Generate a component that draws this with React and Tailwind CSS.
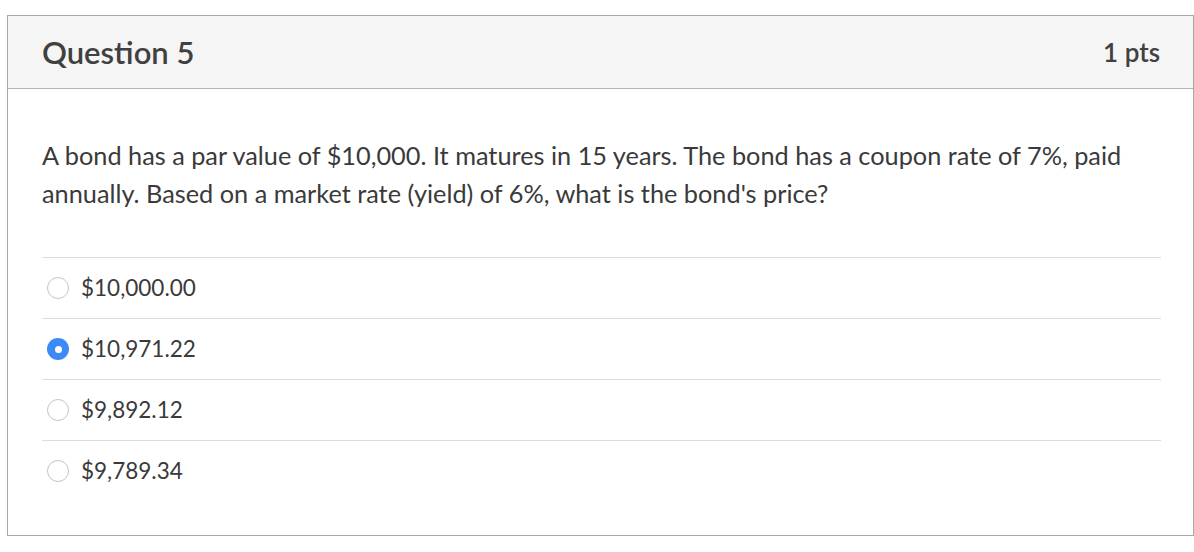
import React, { useState } from 'react';

const opcoes = ['$10,000.00', '$10,971.22', '$9,892.12', '$9,789.34'];

function Radio({ checked }) {
  if (checked) {
    return (
      <span className="w-[22px] h-[22px] rounded-full bg-[#3d8af7] flex items-center justify-center flex-shrink-0">
        <span className="w-[7px] h-[7px] rounded-full bg-white"></span>
      </span>
    );
  }
  return <span className="w-[22px] h-[22px] rounded-full border border-[#c4c4c4] bg-white flex-shrink-0"></span>;
}

export default function App() {
  const [selecionada, setSelecionada] = useState(1);

  return (
    <div className="w-[1194px] h-[552px] bg-white pt-[15px] pl-[7px]" style={{ fontFamily: 'Lato, "Liberation Sans", sans-serif' }}>
      <div className="w-[1187px] h-[521px] border border-[#a8a8a8] flex flex-col">
        <div className="h-[73px] bg-[#f5f5f5] border-b border-[#b3b3b3] flex items-center justify-between pl-[34px] pr-[33px]">
          <h2 className="text-[31px] font-semibold text-[#404040]">Question 5</h2>
          <span className="text-[26px] font-semibold text-[#404040]">1 pts</span>
        </div>
        <div className="pl-[34px] pr-[32px] pt-[47px]">
          <p className="text-[25.3px] leading-[38px] text-[#3a3a3a]">
            A bond has a par value of $10,000. It matures in 15 years. The bond has a coupon rate of 7%, paid annually. Based on a market rate (yield) of 6%, what is the bond's price?
          </p>
          <div className="mt-[45px]">
            {opcoes.map((op, idx) => (
              <div
                key={idx}
                className="h-[61px] border-t border-[#dcdcdc] flex items-center gap-[12px] pl-[5px] cursor-pointer"
                onClick={() => setSelecionada(idx)}
              >
                <Radio checked={selecionada === idx} />
                <span className="text-[22.5px] text-[#3a3a3a]">{op}</span>
              </div>
            ))}
          </div>
        </div>
      </div>
    </div>
  );
}
